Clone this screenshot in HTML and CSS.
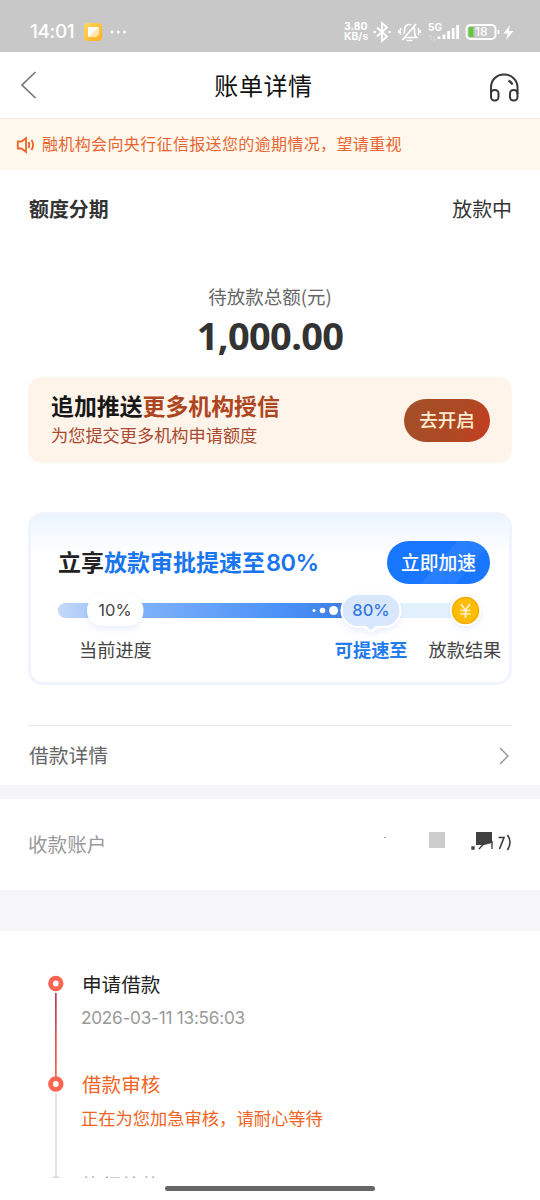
FILE: index.html
```html
<!DOCTYPE html>
<html lang="zh-CN">
<head>
<meta charset="utf-8">
<title>账单详情</title>
<link rel="stylesheet" href="styles.css">
</head>
<body>
<div class="screen">
  <div class="status">
    <span class="clock">14:01</span>
    <svg class="app" width="18" height="18" viewBox="0 0 18 18"><defs><linearGradient id="ag" x1="0" y1="0" x2="1" y2="1"><stop offset="0" stop-color="#ffd75a"/><stop offset="1" stop-color="#ffae22"/></linearGradient></defs><rect width="18" height="18" rx="4" fill="url(#ag)"/><path d="M4 4h11v7l-3 3H4z" fill="#ffe7ae"/><path d="M4 4h11L4 14z" fill="#fff"/></svg>
    <svg class="more" width="18" height="4" viewBox="0 0 18 4" fill="#fff"><circle cx="2" cy="2" r="1.500"/><circle cx="8.300" cy="2" r="1.500"/><circle cx="14.300" cy="2" r="1.500"/></svg>
    <span class="speed"><span>3.80</span><span>KB/s</span></span>
    <svg class="sys" width="168" height="24" viewBox="0 0 168 24" fill="none" stroke="#fff">
      <path d="M5 7.500l10 9-5 4.500V3l5 4.500-10 9" stroke-width="1.800"/><circle cx="2.700" cy="12" r="1.300" fill="#fff" stroke="none"/><circle cx="17.500" cy="12" r="1.300" fill="#fff" stroke="none"/>
      <g transform="translate(26 0)"><path d="M4.500 17.500h14c-2-2-2-4-2-7 0-4-2-6-5-6s-5 2-5 6c0 3 0 5-2 7zM8.500 20.500h6" stroke-width="1.700"/><path d="M4 19L17 3" stroke="#c8c8c8" stroke-width="3"/><path d="M4.500 20L18 4" stroke-width="1.800"/><path d="M2.700 8q-1.500 3.500 0 7M20.300 8q1.500 3.500 0 7" stroke-width="1.600"/><path d="M.5 10v3M22.500 10v3"/></g>
      <text class="net" x="56" y="10.500">5G</text>
      <path d="M59 16v4m-2-3l2-2m3 1v4m0 1l2-2" opacity=".35"/>
      <path d="M67 16.500V19M72 14.500V19M76.600 11V19M81.200 8V19M85.700 5V19" stroke-width="2.800"/>
      <rect x="94.500" y="5" width="29" height="14" rx="4" stroke-width="1.900"/><path d="M98.500 7h3v10h-3a2 2 0 01-2-2V9a2 2 0 012-2z" fill="#5fc83b" stroke="none"/><text class="pct" x="103" y="16.300">18</text><path d="M126.500 10v4" stroke-width="2"/>
      <path d="M138 5l-6.500 8.500h4.300L134 20l7.500-9h-4.800z" fill="#fff" stroke="none"/>
    </svg>
  </div>
  <header class="nav">
    <svg width="18" height="30" viewBox="0 0 18 30"><path d="M15.500 2L2 15l13.500 13" fill="none" stroke="#777" stroke-width="1.700"/></svg>
    <h1>账单详情</h1>
    <svg class="service" width="32" height="32" viewBox="0 0 32 32" fill="none" stroke="#383838" stroke-width="2"><path d="M3 22v-6.500C3 8 8.500 2.500 16 2.500S29.500 8 29.500 15.500V22"/><rect x="3" y="18" width="7.500" height="10.500" rx="3.500"/><rect x="22" y="18" width="7.500" height="10.500" rx="3.500"/><path d="M20.500 8.500q2.500 1.200 4 4" stroke-width="2.400"/></svg>
  </header>
  <div class="notice">
    <svg width="20" height="18" viewBox="0 0 20 18" fill="none" stroke="#ee6529" stroke-width="1.800"><path d="M1.800 5.500h3.700l4.500-3.500v14l-4.500-3.500H1.800zM12.500 6q1.700 3 0 6M15.500 4q3.200 5 0 10"/></svg>
    <span>融机构会向央行征信报送您的逾期情况，望请重视</span>
  </div>
  <div class="heading"><b>额度分期</b><span>放款中</span></div>
  <section class="total"><div class="label">待放款总额(元)</div><div class="amount">1,000.00</div></section>
  <section class="push">
    <div><div class="push-title">追加推送<em>更多机构授信</em></div><div class="push-sub">为您提交更多机构申请额度</div></div>
    <button class="open">去开启</button>
  </section>
  <section class="boost">
    <div class="boost-top"><div class="boost-title">立享<em>放款审批提速至<span class="rate">80%</span></em></div><button class="go">立即加速</button></div>
    <svg class="track" width="444" height="48" viewBox="0 0 444 48">
      <defs><linearGradient id="bar"><stop offset="0" stop-color="#c4dafa"/><stop offset=".25" stop-color="#81b3fa"/><stop offset=".75" stop-color="#4a91f8"/><stop offset="1" stop-color="#3c7cdd"/></linearGradient>
      <filter id="sh" x="-30%" y="-30%" width="160%" height="190%"><feDropShadow dx="0" dy="3" stdDeviation="3" flood-color="#6b91d8" flood-opacity=".15"/></filter></defs>
      <rect y="13" width="420" height="15" rx="7.500" fill="#e3f1fe"/>
      <path d="M7.500 13H300v15H7.500a7.500 7.500 0 010-15z" fill="url(#bar)"/>
      <rect x="29" y="5" width="56.500" height="31" rx="15" fill="#fff" filter="url(#sh)"/><text class="now" x="57" y="26.300" text-anchor="middle">10%</text>
      <g fill="#fff"><circle cx="256" cy="20.500" r="1.500"/><circle cx="264.500" cy="20.500" r="2.800"/><circle cx="275.600" cy="20.500" r="4.500"/></g>
      <path d="M300 3h26a17.500 17.500 0 010 35h-6l-7 5-7-5h-6a17.500 17.500 0 010-35z" fill="#fff" filter="url(#sh)"/>
      <path d="M300 5h26a15.500 15.500 0 010 31h-8l-5 4-5-4h-8a15.500 15.500 0 010-31z" fill="#d9e7fd"/>
      <text class="fast" x="313" y="26.300" text-anchor="middle">80%</text>
      <circle cx="407.500" cy="20.500" r="15.500" fill="#fff" filter="url(#sh)"/><circle cx="407.500" cy="20.500" r="13" fill="#ffbc05" stroke="#f2ac00" stroke-width="1.500"/><path d="M403 14l4.500 6 4.500-6M407.500 20v8M402.500 20.500h10M402.500 24h10" fill="none" stroke="#fff4d0" stroke-width="1.700"/>
    </svg>
    <div class="steps"><span>当前进度</span><strong>可提速至</strong><span>放款结果</span></div>
  </section>
  <div class="detail"><span>借款详情</span><svg width="13" height="20" viewBox="0 0 13 20"><path d="M1 2l8 8-8 8" fill="none" stroke="#999" stroke-width="1.500"/></svg></div>
  <div class="band"></div>
  <div class="account"><span>收款账户</span>
    <svg width="132" height="24" viewBox="0 0 132 24"><path d="M4 5h2v1H4z" fill="#aaa"/><path d="M49 0h16v16H49z" fill="#ccc"/><path d="M96 0h16v11l-8 2h-8z" fill="#414141"/><path d="M92 15h2v2h-2zM99 17l6.500-7M112 9v8" stroke="#3b3b3b" stroke-width="1.300" fill="none"/><path d="M118.500 5.500h5.500l-4.500 11.500M127.500 3q5 7 0 15" stroke="#3b3b3b" stroke-width="1.600" fill="none"/></svg>
  </div>
  <div class="band large"></div>
  <section class="timeline">
    <svg class="rail" width="16" height="203" viewBox="0 0 16 203"><defs><linearGradient id="rg" x1="0" y1="0" x2="0" y2="1"><stop offset="0" stop-color="#b83c58"/><stop offset="1" stop-color="#f06650"/></linearGradient></defs><rect x="7" y="18" width="1.700" height="84" fill="url(#rg)"/><path d="M8 118v83" stroke="#ddd" stroke-width="1.500"/><circle cx="7.800" cy="8.500" r="5.300" fill="#fff" stroke="#fb6551" stroke-width="4.800"/><circle cx="7.800" cy="109" r="5.300" fill="#fff" stroke="#fb6551" stroke-width="4.800"/><circle cx="8" cy="209" r="8" fill="#ddd"/></svg>
    <div class="events">
      <div class="event"><div class="name">申请借款</div><div class="time">2026-03-11 13:56:03</div></div>
      <div class="event current"><div class="name">借款审核</div><div class="message">正在为您加急审核，请耐心等待</div></div>
      <div class="event waiting"><div class="name">执行放款</div></div>
    </div>
  </section>
  <div class="home"></div>
</div>
</body>
</html>
```
FILE: styles.css
```css
* { box-sizing: border-box; }
body { margin: 0; background: #fff; color: #333; font-family: "Noto Sans CJK SC", sans-serif; }
em { font-style: normal; }
svg { display: block; flex: none; }
button { border: 0; padding: 0 0 3px; font-family: inherit; }
.screen { width: 540px; height: 1200px; overflow: hidden; display: flex; flex-direction: column; white-space: nowrap; }
.screen > * { flex: none; }
.status { height: 52px; background: #c8c8c8; color: #fff; display: flex; align-items: center; padding: 12px 0 0 30px; }
.status > * { flex: none; }
.clock { width: 54px; font: 500 19px/24px Inter, sans-serif; letter-spacing: -.4px; }
.more { margin-left: 8px; }
.speed { margin-left: 216px; width: 28px; font: 700 10.400px/10px Inter, sans-serif; display: flex; flex-direction: column; }
.net { font: 700 10px Inter, sans-serif; fill: #fff; stroke: none; }
.pct { font: 500 12px Inter, sans-serif; fill: #fff; stroke: none; }
.nav { height: 67px; display: flex; align-items: center; justify-content: space-between; padding: 0 20px; border-bottom: 1px solid #f4eee8; }
.nav h1 { margin: 0; font-size: 24px; line-height: 34px; font-weight: 400; color: #111; letter-spacing: .6px; padding: 0 0 1px 1px; }
.service { margin-top: 6px; }
.notice { height: 51px; background: #fff8ec; display: flex; align-items: center; padding: 0 16px; gap: 6px; color: #e76532; font-size: 16px; letter-spacing: .36px; }
.notice span { padding-bottom: 3px; }
.heading { height: 78px; padding: 0 28px 1px 29px; display: flex; align-items: center; justify-content: space-between; font-size: 19.900px; }
.heading b { font-weight: 600; }
.total { height: 129px; padding-top: 35px; text-align: center; }
.label { font-size: 18.500px; line-height: 26px; color: #666; }
.amount { font: 700 38px/52px "Noto Sans", sans-serif; letter-spacing: -.65px; }
.push { height: 86px; margin: 0 28px; padding: 0 22px; border-radius: 14px; background: #fff4ea; display: flex; align-items: center; justify-content: space-between; }
.push > div { padding: 0 0 3px 1px; }
.push-title { font-size: 22.900px; line-height: 32px; font-weight: 600; color: #171717; }
.push-title em { color: #ad451f; }
.push-sub { font-size: 17.200px; line-height: 27px; color: #a84a30; }
.open { width: 86px; height: 43px; border-radius: 22px; background: linear-gradient(120deg, #a35028, #ad4924 60%, #c93b20); color: #ffecd0; font-size: 18.500px; font-weight: 500; }
.boost { height: 173px; margin: 49px 28px 0; border: 3px solid #f0f5fd; border-radius: 15px; background: linear-gradient(#ecf5ff, #fff 24%); }
.boost-top { height: 70px; padding: 25px 19px 0 27px; display: flex; justify-content: space-between; align-items: center; }
.boost-title { font-size: 23px; font-weight: 600; color: #222; padding-bottom: 4px; }
.boost-title em { color: #1976ee; }
.rate { font: 600 23.500px/30px Inter, sans-serif; margin-left: 1px; letter-spacing: -.5px; }
.go { width: 103px; height: 43px; border-radius: 22px; background: linear-gradient(130deg, #1876ff 50%, #2a80ff 51%, #247dff 75%, #1876ff 76%); color: #fff; font-size: 18.800px; font-weight: 500; }
.track { margin: 5px 0 0 27px; }
.now, .fast { font: 400 16.500px Inter, sans-serif; fill: #444; }
.fast { font-weight: 500; fill: #3477dd; }
.steps { padding-left: 48px; margin-top: -3px; display: flex; font-size: 18.200px; line-height: 28px; color: #444; }
.steps strong { margin: 0 21px 0 183px; color: #247bed; font-weight: 600; }
.detail { height: 60px; margin: 40px 28px 0; border-top: 1px solid #e6e6e6; display: flex; align-items: center; justify-content: space-between; font-size: 19.800px; color: #666; }
.detail span { padding: 0 0 2px 1px; }
.band { height: 14px; background: #f6f6f9; }
.large { height: 41px; }
.account { height: 91px; padding: 0 28px 2px; display: flex; align-items: center; justify-content: space-between; font-size: 19.600px; color: #999; }
.timeline { height: 247px; padding: 44px 0 0 48px; display: flex; gap: 18px; overflow: hidden; }
.name { font-size: 19.600px; line-height: 30px; color: #222; }
.events { margin-top: -6px; }
.event { height: 100px; }
.time { margin: 7px 0 0 -1px; font: 400 17.200px/24px Inter, sans-serif; color: #999; letter-spacing: -.25px; }
.message { font-size: 17.280px; line-height: 26px; margin: 6px 0 0 -1px; }
.current .name, .current .message { color: #f06423; }
.waiting .name { color: #aaa; padding-top: 1px; }
.home { width: 210px; height: 5px; margin: 8px auto 0 165px; border-radius: 3px; background: #666; }
```
